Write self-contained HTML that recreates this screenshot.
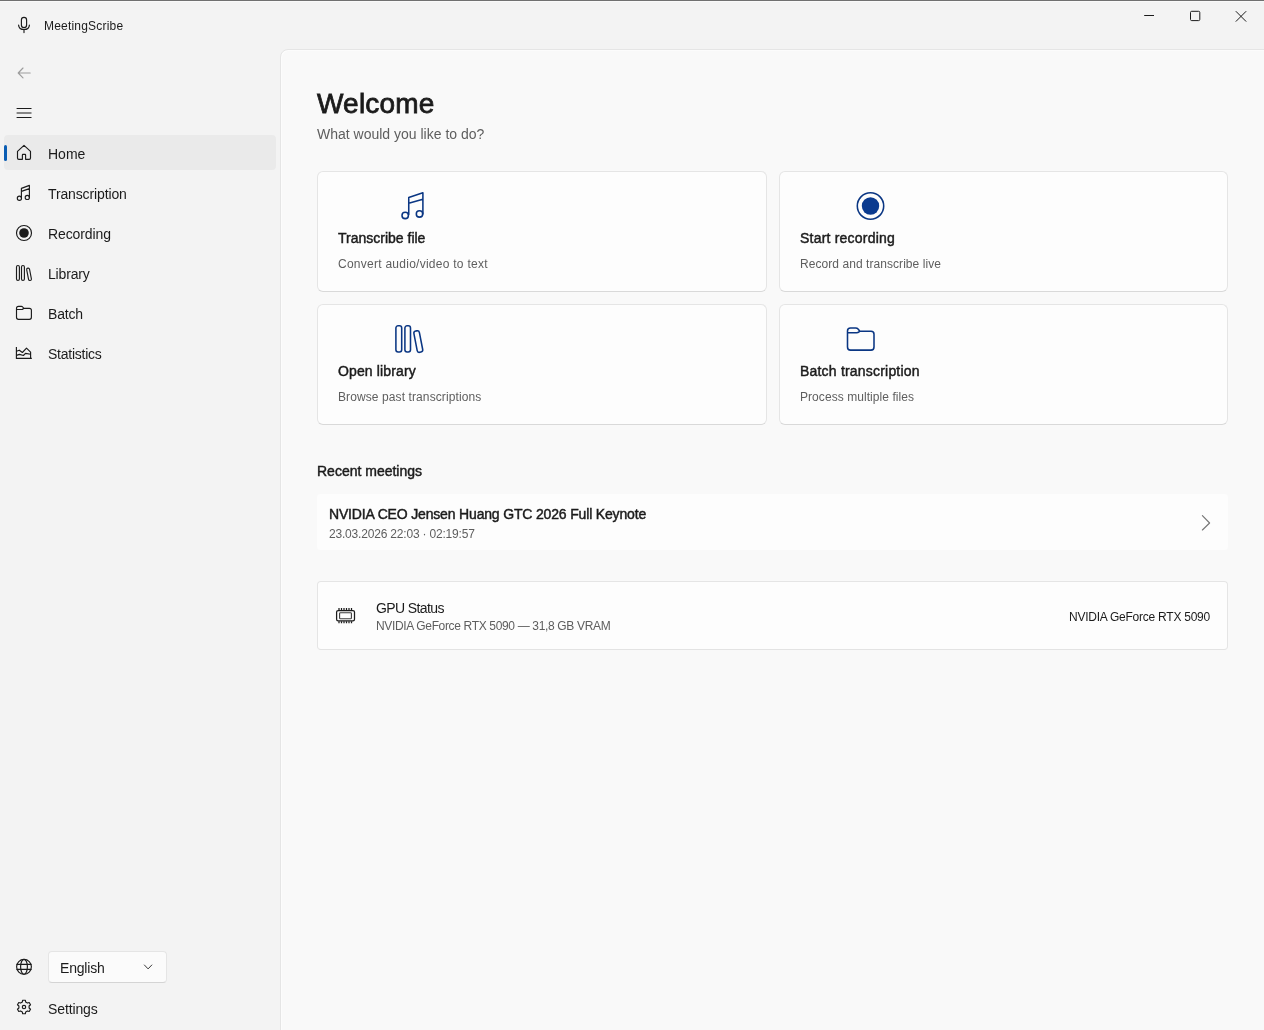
<!DOCTYPE html>
<html><head><meta charset="utf-8">
<style>
*{margin:0;padding:0;box-sizing:border-box}
html,body{width:1264px;height:1030px;overflow:hidden}
body{-webkit-font-smoothing:antialiased;background:#f3f3f3;font-family:"Liberation Sans",sans-serif;color:#1b1b1b;position:relative}
.abs{position:absolute}
.t{position:absolute;white-space:nowrap;line-height:1;will-change:transform}
.nav{font-size:14px;color:#1b1b1b}
.content{left:280px;top:49px;width:990px;height:990px;background:#f9f9f9;border:1px solid #e5e5e5;border-radius:8px 0 0 0;box-shadow:inset 1px 1px 0 #fcfcfc}
.card{position:absolute;background:#fdfdfd;border:1px solid #e5e5e5;border-bottom-color:#d9d9d9;border-radius:6px}
.ct{font-size:14px;-webkit-text-stroke:0.45px #1b1b1b;color:#1b1b1b}
.cs{font-size:12px;color:#5e5e5e}
svg{position:absolute;overflow:visible}
.ic{fill:none;stroke:#1b1b1b;stroke-width:1.15;stroke-linecap:round;stroke-linejoin:round}
.bl{fill:none;stroke:#0a3683;stroke-width:1.55;stroke-linecap:round;stroke-linejoin:round}
</style></head><body>
<div class="abs" style="left:0;top:0;width:1264px;height:1px;background:#707070"></div>
<div class="abs" style="left:0;top:1px;width:1264px;height:1px;background:#f9f9f9"></div>

<!-- title bar -->
<svg style="left:12px;top:13px" width="24" height="24" viewBox="0 0 24 24"><g class="ic">
<rect x="9.4" y="4.3" width="5.2" height="10.3" rx="2.6"/>
<path d="M6.6 12.1 Q6.9 16.5 12 16.5 Q17.1 16.5 17.4 12.1 M12 16.5 V19.6"/>
</g></svg>
<div class="t" style="left:44px;top:20px;font-size:12px;letter-spacing:0.2px">MeetingScribe</div>

<!-- window controls -->
<svg style="left:1130px;top:0" width="134" height="32" viewBox="1130 0 134 32"><g class="ic" style="stroke-linecap:butt;stroke-width:1">
<path d="M1144.2 15.5 H1154"/>
<rect x="1190.5" y="11.3" width="9.3" height="9.3" rx="1.2"/>
<path d="M1235.8 11.2 L1246.2 21.6 M1246.2 11.2 L1235.8 21.6"/>
</g></svg>

<!-- content panel -->
<div class="abs content"></div>

<!-- back / hamburger -->
<svg style="left:12px;top:61px" width="24" height="24" viewBox="0 0 24 24"><g class="ic" style="stroke:#9d9d9d">
<path d="M6.3 12 H18.2 M11 7 L6.2 12 L11 16.8"/>
</g></svg>
<svg style="left:12px;top:101px" width="24" height="24" viewBox="0 0 24 24"><g class="ic" style="stroke-linecap:butt">
<path d="M4.6 7.5 H19.5 M4.6 12 H19.5 M4.6 16.5 H19.5"/>
</g></svg>

<!-- selected nav bg -->
<div class="abs" style="left:4px;top:135px;width:272px;height:35px;background:#eaeaea;border-radius:4px"></div>
<div class="abs" style="left:4px;top:145px;width:3px;height:16px;background:#0a5db3;border-radius:2px"></div>

<!-- nav icons -->
<svg style="left:12px;top:141px" width="24" height="24" viewBox="0 0 24 24"><g class="ic">
<path d="M12 4.3 L5.5 10.3 V17 Q5.5 18.3 6.8 18.3 H10.4 V13.9 Q10.4 13.4 10.9 13.4 H13.1 Q13.6 13.4 13.6 13.9 V18.3 H17.2 Q18.5 18.3 18.5 17 V10.3 Z"/>
</g></svg>
<svg style="left:12px;top:182px" width="24" height="24" viewBox="0 0 24 24"><g class="ic">
<path d="M9.4 16 V6.4 L17.4 3.4 V15.4 M9.4 9.4 L17.4 6.6"/>
<circle cx="7.4" cy="16.2" r="2.1"/>
<circle cx="15.3" cy="15.4" r="2.1"/>
</g></svg>
<svg style="left:12px;top:222px" width="24" height="24" viewBox="0 0 24 24"><g class="ic">
<circle cx="12" cy="11" r="7.5"/>
<circle cx="12" cy="11" r="4.8" style="fill:#1b1b1b;stroke:none"/>
</g></svg>
<svg style="left:12px;top:262px" width="24" height="24" viewBox="0 0 24 24"><g class="ic">
<rect x="4.5" y="3.5" width="2.9" height="14.9" rx="1.45"/>
<rect x="9.5" y="3.5" width="2.9" height="14.9" rx="1.45"/>
<rect x="15.6" y="6" width="2.9" height="12.6" rx="1.45" transform="rotate(-11 17.05 12.3)"/>
</g></svg>
<svg style="left:12px;top:302px" width="24" height="24" viewBox="0 0 24 24"><g class="ic">
<path d="M4.5 6.4 Q4.5 4.4 6.5 4.4 H9.4 Q10.2 4.4 10.7 5 L11.8 6.3 H17.4 Q19.4 6.3 19.4 8.3 V15.3 Q19.4 17.3 17.4 17.3 H6.5 Q4.5 17.3 4.5 15.3 Z M4.5 7.5 H9.8 Q10.5 7.5 11 7 L11.8 6.3"/>
</g></svg>
<svg style="left:12px;top:342px" width="24" height="24" viewBox="0 0 24 24"><g class="ic" style="stroke-linecap:butt">
<path d="M4.4 5.1 V16.4 H19.8"/>
<path d="M4.4 9.3 L7.3 8.2 L10.4 10.5 L14.5 6.2 L18.6 10.2 V16.4"/>
<path d="M4.4 13.4 L7.5 12.4 L11.4 13.5 L13.5 11.4 L18.6 12.3"/>
</g></svg>

<div class="t nav" style="left:48px;top:147px">Home</div>
<div class="t nav" style="left:48px;top:187px;letter-spacing:-0.13px">Transcription</div>
<div class="t nav" style="left:48px;top:227px;letter-spacing:-0.1px">Recording</div>
<div class="t nav" style="left:48px;top:267px;letter-spacing:-0.17px">Library</div>
<div class="t nav" style="left:48px;top:307px;letter-spacing:-0.2px">Batch</div>
<div class="t nav" style="left:48px;top:347px;letter-spacing:-0.25px">Statistics</div>

<div class="t" style="left:317px;top:90px;font-size:28px;-webkit-text-stroke:0.8px #1b1b1b;letter-spacing:0.2px">Welcome</div>
<div class="t" style="left:317px;top:127px;font-size:14px;color:#5e5e5e">What would you like to do?</div>

<div class="card" style="left:317px;top:171px;width:450px;height:121px"></div>
<div class="card" style="left:779px;top:171px;width:449px;height:121px"></div>
<div class="card" style="left:317px;top:304px;width:450px;height:121px"></div>
<div class="card" style="left:779px;top:304px;width:449px;height:121px"></div>

<!-- card icons -->
<svg style="left:396px;top:188px" width="32" height="36" viewBox="0 0 32 36"><g class="bl">
<path d="M12.75 26.5 V9.4 L26.9 4.7 V25.9 M12.75 15.3 L26.9 11.3"/>
<circle cx="9.2" cy="27.4" r="3.2"/>
<circle cx="23.5" cy="25.9" r="3.2"/>
</g></svg>
<svg style="left:852px;top:188px" width="36" height="36" viewBox="0 0 36 36"><g class="bl">
<circle cx="18.5" cy="18" r="13.2"/>
<circle cx="18.5" cy="18" r="8.7" style="fill:#0a3a8f;stroke:none"/>
</g></svg>
<svg style="left:390px;top:320px" width="40" height="36" viewBox="0 0 40 36"><g class="bl">
<rect x="5.9" y="5.8" width="5.8" height="26.2" rx="2.2"/>
<rect x="14.9" y="5.8" width="5.6" height="26.2" rx="2.2"/>
<rect x="25.5" y="10.8" width="5.6" height="21.6" rx="2.2" transform="rotate(-11 28.3 21.6)"/>
</g></svg>
<svg style="left:842px;top:320px" width="36" height="36" viewBox="0 0 36 36"><g class="bl">
<path d="M5.5 11 Q5.5 8 8.5 8 H13.6 Q15.2 8 16.3 9.2 L17.8 11.2 H29 Q32 11.2 32 14.2 V27 Q32 30.1 29 30.1 H8.5 Q5.5 30.1 5.5 27 Z M5.5 12.8 H14.6 Q16 12.8 17 11.9 L17.8 11.2"/>
</g></svg>

<div class="t ct" style="left:338px;top:231px">Transcribe file</div>
<div class="t cs" style="left:338px;top:258px;letter-spacing:0.26px">Convert audio/video to text</div>
<div class="t ct" style="left:800px;top:231px;letter-spacing:0.21px">Start recording</div>
<div class="t cs" style="left:800px;top:258px;letter-spacing:0.06px">Record and transcribe live</div>
<div class="t ct" style="left:338px;top:364px;letter-spacing:0.13px">Open library</div>
<div class="t cs" style="left:338px;top:391px;letter-spacing:0.1px">Browse past transcriptions</div>
<div class="t ct" style="left:800px;top:364px;letter-spacing:0.2px">Batch transcription</div>
<div class="t cs" style="left:800px;top:391px;letter-spacing:0.06px">Process multiple files</div>

<div class="t ct" style="left:317px;top:464px">Recent meetings</div>

<div class="abs" style="left:317px;top:494px;width:911px;height:56px;background:#fdfdfd;border-radius:4px"></div>
<div class="t ct" style="left:329px;top:507px;letter-spacing:-0.166px">NVIDIA CEO Jensen Huang GTC 2026 Full Keynote</div>
<div class="t cs" style="left:329px;top:528px;letter-spacing:-0.19px">23.03.2026 22:03 &middot; 02:19:57</div>
<svg style="left:1190px;top:505px" width="32" height="36" viewBox="0 0 32 36"><g class="ic" style="stroke:#767676">
<path d="M12.4 10.7 L19.6 18 L12.4 25"/>
</g></svg>

<div class="card" style="left:317px;top:581px;width:911px;height:69px;border-radius:4px;border-bottom-color:#e3e3e3"></div>
<svg style="left:330px;top:600px" width="32" height="32" viewBox="0 0 32 32"><g class="ic" style="stroke-linecap:butt;stroke-width:1.25">
<rect x="6.6" y="10.5" width="17.9" height="10.3" rx="1.6"/>
<rect x="9.6" y="12.8" width="11.8" height="5.9" rx="0.8" style="stroke:#3c3c3c;stroke-width:1.1"/>
<path d="M9 8.1 V10 M11.5 8.1 V10 M14 8.1 V10 M16.5 8.1 V10 M19 8.1 V10 M21.5 8.1 V10 M9 21.3 V23.2 M11.5 21.3 V23.2 M14 21.3 V23.2 M16.5 21.3 V23.2 M19 21.3 V23.2 M21.5 21.3 V23.2"/>
</g></svg>
<div class="t" style="left:376px;top:601px;font-size:14px;letter-spacing:-0.6px">GPU Status</div>
<div class="t cs" style="left:376px;top:620px;letter-spacing:-0.34px">NVIDIA GeForce RTX 5090 — 31,8 GB VRAM</div>
<div class="t" style="left:1069px;top:611px;font-size:12px;letter-spacing:-0.24px">NVIDIA GeForce RTX 5090</div>

<!-- footer -->
<svg style="left:12px;top:955px" width="24" height="24" viewBox="0 0 24 24"><g class="ic">
<circle cx="12" cy="11.8" r="7.4"/>
<ellipse cx="12" cy="11.8" rx="3.4" ry="7.4"/>
<path d="M4.9 9.3 H19.1 M4.9 14.3 H19.1"/>
</g></svg>
<div class="abs" style="left:48px;top:951px;width:119px;height:32px;background:#fbfbfb;border:1px solid #e5e5e5;border-bottom-color:#d4d4d4;border-radius:4px"></div>
<div class="t nav" style="left:60px;top:961px;letter-spacing:-0.2px">English</div>
<svg style="left:136px;top:955px" width="24" height="24" viewBox="0 0 24 24"><g class="ic" style="stroke:#3a3a3a;stroke-width:1">
<path d="M8.4 10 L12.1 13.9 L15.8 10"/>
</g></svg>
<svg style="left:12px;top:995px" width="24" height="24" viewBox="0 0 24 24"><g class="ic">
<path d="M10.31 7.08 L10.68 5.23 L13.32 5.23 L13.69 7.08 L15.41 8.08 L17.21 7.47 L18.52 9.75 L17.10 11.01 L17.10 12.99 L18.52 14.25 L17.21 16.53 L15.41 15.92 L13.69 16.92 L13.32 18.77 L10.68 18.77 L10.31 16.92 L8.59 15.92 L6.79 16.53 L5.48 14.25 L6.90 12.99 L6.90 11.01 L5.48 9.75 L6.79 7.47 L8.59 8.08 Z"/>
<circle cx="12" cy="12" r="1.7"/>
</g></svg>
<div class="t nav" style="left:48px;top:1002px;letter-spacing:-0.12px">Settings</div>

</body></html>
